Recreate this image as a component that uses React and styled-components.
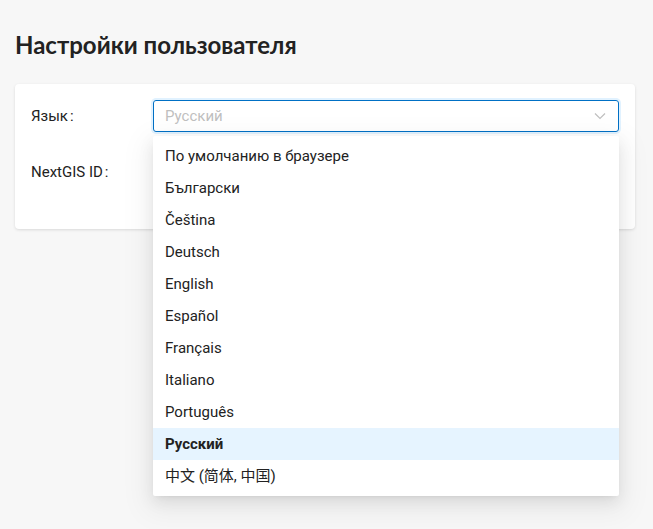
import React from 'react';
import styled, { createGlobalStyle } from 'styled-components';

const Global = createGlobalStyle`
    body {
        margin: 0;
        background: #f7f7f7;
        font-family: Roboto, "Noto Sans CJK SC", sans-serif;
        color: rgba(0, 0, 0, 0.88);
    }
`;

const Page = styled.div`
    min-height: 100vh;
    box-sizing: border-box;
    padding: 29px 18px 0 15px;
`;

const Title = styled.h1`
    margin: 0 0 24px;
    font-family: Lato, sans-serif;
    font-weight: 700;
    font-size: 24px;
    line-height: 31px;
    color: #222;
`;

const Card = styled.div`
    background: #fff;
    border-radius: 4px;
    box-shadow: 0 1px 3px rgba(0, 0, 0, 0.12);
    padding: 16px 16px 41px 16px;
`;

const Row = styled.div`
    display: grid;
    grid-template-columns: 122px 1fr;
    align-items: center;
    height: 32px;
    margin-bottom: ${(p) => p.gap || 0}px;
`;

const Label = styled.label`
    font-size: 15px;
    color: #222;
    &::after {
        content: ':';
        margin-left: 2px;
    }
`;

const SelectWrap = styled.div`
    position: relative;
`;

const Select = styled.div`
    box-sizing: border-box;
    height: 32px;
    border: 1px solid #0070c5;
    border-radius: 3px;
    box-shadow: 0 0 0 2px rgba(5, 145, 255, 0.12);
    display: flex;
    align-items: center;
    justify-content: space-between;
    padding: 0 12px 0 11px;
    font-size: 15px;
    color: #bfbfbf;
`;

const Menu = styled.ul`
    position: absolute;
    top: 36px;
    left: 0;
    right: 0;
    margin: 0;
    padding: 4px 0;
    list-style: none;
    background: #fff;
    border-radius: 2px;
    box-shadow: 0 6px 16px rgba(0, 0, 0, 0.08), 0 3px 6px -4px rgba(0, 0, 0, 0.12), 0 9px 28px 8px rgba(0, 0, 0, 0.05);
    z-index: 10;
`;

const Item = styled.li`
    height: 32px;
    line-height: 32px;
    padding: 0 12px;
    font-size: 15px;
    color: #222;
    background: ${(p) => (p.active ? '#e6f4ff' : 'transparent')};
    font-weight: ${(p) => (p.active ? 700 : 400)};
`;

const langs = [
    'По умолчанию в браузере',
    'Български',
    'Čeština',
    'Deutsch',
    'English',
    'Español',
    'Français',
    'Italiano',
    'Português',
    'Русский',
    '中文 (简体, 中国)',
];

const Chevron = () => (
    <svg width="12" height="12" viewBox="0 0 12 12" fill="none">
        <path d="M1 3.5L6 8.5L11 3.5" stroke="#bfbfbf" strokeWidth="1.2" />
    </svg>
);

export default function App() {
    return (
        <Page>
            <Global />
            <Title>Настройки пользователя</Title>
            <Card>
                <Row gap={24}>
                    <Label>Язык</Label>
                    <SelectWrap>
                        <Select>
                            <span>Русский</span>
                            <Chevron />
                        </Select>
                        <Menu>
                            {langs.map((l) => (
                                <Item key={l} active={l === 'Русский'}>{l}</Item>
                            ))}
                        </Menu>
                    </SelectWrap>
                </Row>
                <Row>
                    <Label>NextGIS ID</Label>
                    <div />
                </Row>
            </Card>
        </Page>
    );
}
